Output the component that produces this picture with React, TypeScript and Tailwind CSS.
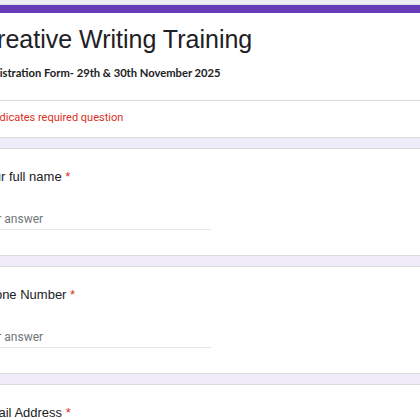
import React from "react";

const questions = [
  { id: "name", label: "Your full name" },
  { id: "phone", label: "Phone Number" },
  { id: "email", label: "Email Address" },
];

function Question({ label }: { label: string }) {
  return (
    <div className="bg-white border border-[#dadce0] rounded-lg px-[24px] pt-[18px] pb-[25px]">
      <div className="pl-[2px] text-[13px] leading-[20px] text-[#202124] font-['Liberation_Sans',Arial,sans-serif]">
        {label} <span className="text-[#d93025]">*</span>
      </div>
      <div className="mt-[24px] w-[234px] border-b border-[#e6e6ea] pb-[2px] text-[12px] leading-[16px] text-[#70757a] font-['Roboto',sans-serif]">
        Your answer
      </div>
    </div>
  );
}

export default function App() {
  return (
    <div className="w-[420px] h-[420px] overflow-hidden bg-[#f0ebf8]">
      <div className="w-[640px] -ml-[48px] pt-[4px] flex flex-col gap-[10px]">
        {/* Header card */}
        <div className="bg-white border border-[#dadce0] rounded-lg overflow-hidden">
          <div className="h-[8px] bg-[#673ab7]" />
          <div className="px-[24px] pt-[10px] pb-[19px] border-b border-[#dadce0]">
            <h1 className="ml-[2px] text-[25px] leading-[32px] text-[#202124] font-['Liberation_Sans',Arial,sans-serif]">
              Creative Writing Training
            </h1>
            <p className="ml-[4px] mt-[10px] text-[11.2px] leading-[16px] font-bold text-[#202124] font-['Lato',sans-serif]">
              Registration Form- 29th &amp; 30th November 2025
            </p>
          </div>
          <div className="pl-[30px] pr-[24px] pt-[9px] pb-[11px] text-[11px] leading-[16px] text-[#d93025] font-['Roboto',sans-serif]">
            * Indicates required question
          </div>
        </div>

        {questions.map((q) => (
          <Question key={q.id} label={q.label} />
        ))}
      </div>
    </div>
  );
}
